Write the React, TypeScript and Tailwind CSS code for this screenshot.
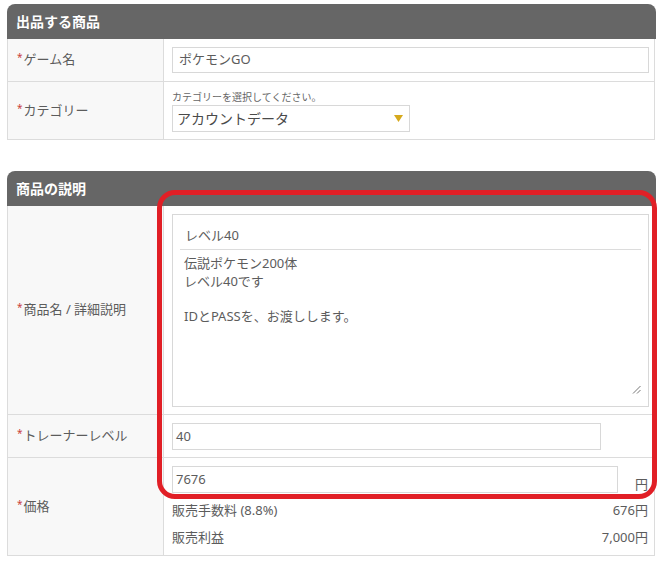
import React from "react";

function Req() {
  return <span className="text-[#c8413b] text-[10px] leading-none relative -top-[3px] mr-[1px]">*</span>;
}

function Label({ children }: { children: React.ReactNode }) {
  return (
    <div className="flex items-center bg-[#f8f8f8] border-r border-[#dcdcdc] pl-[9px] text-[13px] text-[#5c5c5c]">
      <Req />
      {children}
    </div>
  );
}

function Header({ children }: { children: React.ReactNode }) {
  return (
    <div className="h-[35px] w-[649px] rounded-t-[8px] bg-[#666666] flex items-center pl-[9px] text-white text-[14px] font-bold">
      {children}
    </div>
  );
}

export default function App() {
  return (
    <div className="bg-white min-h-[565px] w-[660px] pt-[4px] pl-[7px] relative font-['Noto_Sans','Noto_Sans_CJK_JP',sans-serif] text-[#5c5c5c]">
      {/* Section 1 */}
      <Header>出品する商品</Header>
      <div className="w-[648px] border-x border-b border-[#dcdcdc]">
        <div className="grid grid-cols-[156px_1fr] border-b border-[#dcdcdc]">
          <Label>ゲーム名</Label>
          <div className="pl-[8px] py-[8px]">
            <div className="h-[26px] w-[477px] border border-[#d8d8d8] flex items-center pl-[6px] text-[13px] text-[#5c5c5c]">
              ポケモンGO
            </div>
          </div>
        </div>
        <div className="grid grid-cols-[156px_1fr]">
          <Label>カテゴリー</Label>
          <div className="pl-[8px] pt-[8px] pb-[7px]">
            <div className="text-[10px] leading-[14px] text-[#666]">カテゴリーを選択してください。</div>
            <div className="mt-[1px] h-[27px] w-[238px] border border-[#d8d8d8] flex items-center justify-between pl-[4px] pr-[6px] text-[14px] text-[#4a4a4a]">
              <span>アカウントデータ</span>
              <svg width="9" height="7" viewBox="0 0 9 7">
                <polygon points="0,0 9,0 4.5,7" fill="#d6a91c" />
              </svg>
            </div>
          </div>
        </div>
      </div>

      {/* Section 2 */}
      <div className="mt-[31px]">
        <Header>商品の説明</Header>
        <div className="w-[648px] border-x border-b border-[#dcdcdc]">
          <div className="grid grid-cols-[156px_1fr] border-b border-[#dcdcdc]">
            <Label>商品名 / 詳細説明</Label>
            <div className="pl-[8px] pt-[8px] pb-[7px]">
              <div className="relative h-[193px] w-[477px] border border-[#d8d8d8] text-[13px] text-[#5c5c5c]">
                <div className="pl-[12px] pt-[11px] leading-[18px]">レベル40</div>
                <div className="mt-[5px] ml-[7px] mr-[7px] border-t border-[#dcdcdc]" />
                <div className="pl-[11px] pt-[5px] leading-[17.5px]">
                  <div>伝説ポケモン200体</div>
                  <div>レベル40です</div>
                  <div>&nbsp;</div>
                  <div>IDとPASSを、お渡しします。</div>
                </div>
                <svg className="absolute right-[7px] bottom-[12px]" width="9" height="9" viewBox="0 0 9 9">
                  <line x1="1" y1="8.5" x2="8.5" y2="1" stroke="#777" strokeWidth="1" />
                  <line x1="5" y1="8.5" x2="8.5" y2="5" stroke="#777" strokeWidth="1" />
                </svg>
              </div>
            </div>
          </div>
          <div className="grid grid-cols-[156px_1fr] border-b border-[#dcdcdc]">
            <Label>トレーナーレベル</Label>
            <div className="pl-[8px] pt-[8px] pb-[7px]">
              <div className="h-[27px] w-[429px] border border-[#d8d8d8] flex items-center pl-[3px] text-[13px] text-[#5c5c5c]">
                40
              </div>
            </div>
          </div>
          <div className="grid grid-cols-[156px_1fr]">
            <Label>価格</Label>
            <div className="pl-[8px] pr-[6px] pt-[8px] pb-[4px] text-[13px] text-[#5c5c5c]">
              <div className="flex items-end justify-between">
                <div className="h-[27px] w-[446px] border border-[#d8d8d8] flex items-center pl-[3px]">
                  7676
                </div>
                <span className="leading-[16px] mb-[1px]">円</span>
              </div>
              <div className="h-[27px] mt-[4px] flex items-center justify-between">
                <span>販売手数料 (8.8%)</span>
                <span>676円</span>
              </div>
              <div className="h-[27px] flex items-center justify-between">
                <span>販売利益</span>
                <span>7,000円</span>
              </div>
            </div>
          </div>
        </div>
      </div>

      {/* Red annotation */}
      <div className="absolute left-[157px] top-[190px] w-[500px] h-[309px] border-[5px] border-[#e11f26] rounded-[18px] pointer-events-none" />
    </div>
  );
}
